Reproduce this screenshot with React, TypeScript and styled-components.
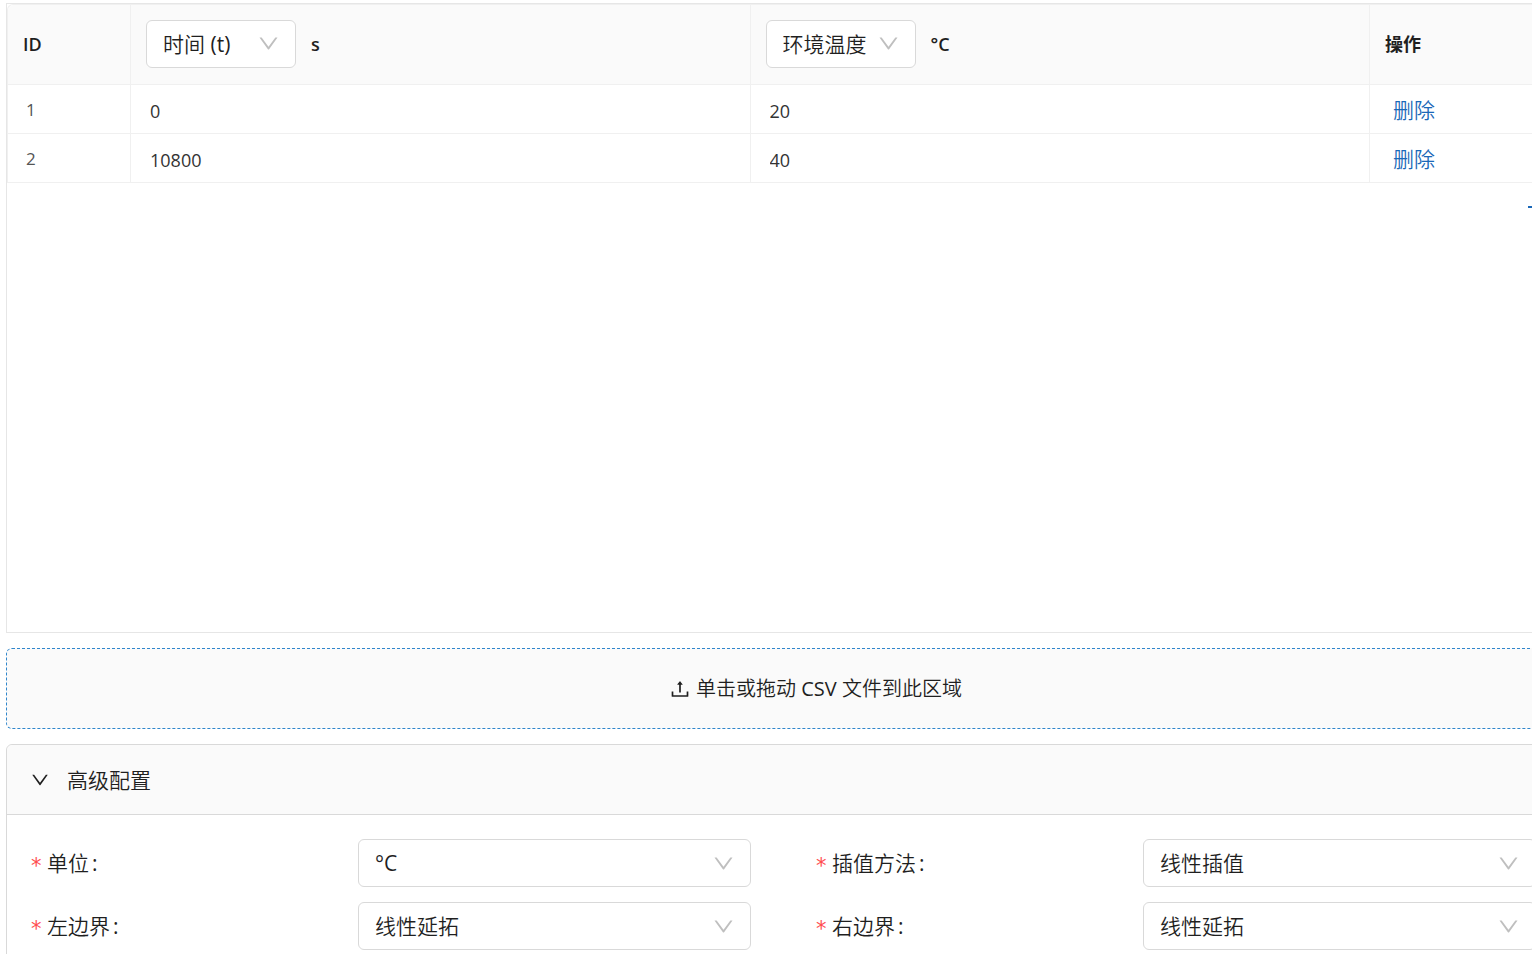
import React, { useState } from "react";
import styled, { createGlobalStyle } from "styled-components";

const GlobalStyle = createGlobalStyle`
  *, *::before, *::after { box-sizing: border-box; }
  body {
    margin: 0;
    background: #fff;
    color: #1f1f1f;
    font-family: "Open Sans", "Noto Sans CJK SC DemiLight", "Noto Sans CJK SC", sans-serif;
    font-size: 21px;
    line-height: 32px;
  }
  button, input, select { font: inherit; color: inherit; }
`;

const Viewport = styled.div`
  overflow: hidden;
`;

/* The editor is wider than its viewport and runs past the right edge. */
const Page = styled.main`
  display: flex;
  flex-direction: column;
  gap: 15px;
  width: calc(100% + 94px);
  padding: 3px 0 0 6px;
`;

const TablePanel = styled.section`
  min-height: 630px;
  border: 1px solid #e6e6e6;
`;

const DataTable = styled.table`
  width: 100%;
  table-layout: fixed;
  border-collapse: separate;
  border-spacing: 0;
  border-top: 1px solid #f0f0f0;
  border-left: 1px solid #f0f0f0;
  border-radius: 6px 0 0 0;
`;

const HeadCell = styled.th<{ $width?: number }>`
  width: ${(p) => (p.$width ? `${p.$width}px` : "auto")};
  height: 80px;
  padding: 0 15px 2px;
  text-align: left;
  font-family: "Open Sans", "Noto Sans CJK SC", sans-serif;
  font-size: 18px;
  font-weight: 600;
  background: #fafafa;
  border-right: 1px solid #f0f0f0;
  border-bottom: 1px solid #f0f0f0;
  &:first-child { border-top-left-radius: 6px; }
`;

const HeadField = styled.div`
  display: flex;
  align-items: center;
  gap: 15px;
`;

const Cell = styled.td`
  height: 49px;
  padding: 0 18px;
  font-size: 18px;
  color: #333;
  border-right: 1px solid #f0f0f0;
  border-bottom: 1px solid #f0f0f0;
`;

const IdCell = styled(Cell)`
  padding-top: 2px;
  color: #555;
  font-size: 17px;
`;

const ValueInput = styled.input`
  display: block;
  width: 100%;
  height: 40px;
  padding: 3px 1px 0;
  border: 0;
  outline: 0;
  background: transparent;
`;

const LinkButton = styled.button`
  display: block;
  height: 40px;
  padding: 2px 5px 0;
  border: 0;
  background: none;
  color: #1a68b8;
  font-size: 21px;
  cursor: pointer;
`;

const AddRow = styled.div`
  display: flex;
  justify-content: flex-end;
  padding: 13px 80px 0 0;
`;

const AddButton = styled.button`
  display: flex;
  padding: 0;
  border: 0;
  background: none;
  color: #1a68b8;
  cursor: pointer;
`;

const SelectBox = styled.span<{ $width: string }>`
  position: relative;
  display: block;
  flex: none;
  width: ${(p) => p.$width};
  height: 48px;
`;

const NativeSelect = styled.select`
  appearance: none;
  width: 100%;
  height: 100%;
  padding: 0 40px 0 16px;
  border: 1px solid #d9d9d9;
  border-radius: 6px;
  background: #fff;
  font-family: "Open Sans", "Noto Sans CJK SC DemiLight", "Noto Sans CJK SC", sans-serif;
  font-size: 21px;
  font-weight: 400;
`;

const SelectArrow = styled.span`
  position: absolute;
  top: 0;
  right: 17px;
  bottom: 0;
  display: flex;
  align-items: center;
  color: #bfbfbf;
  pointer-events: none;
`;

const UploadArea = styled.button`
  display: flex;
  align-items: center;
  justify-content: center;
  gap: 6px;
  height: 81px;
  border: 1px dashed #2f86cc;
  border-radius: 6px;
  background: #fafafa;
  font-size: 20px;
  cursor: pointer;
`;

const Collapse = styled.section`
  border: 1px solid #d9d9d9;
  border-radius: 6px;
`;

const CollapseHeader = styled.button`
  display: flex;
  align-items: center;
  gap: 18px;
  width: 100%;
  height: 70px;
  padding: 0 24px;
  border: 0;
  border-bottom: 1px solid #d9d9d9;
  border-radius: 6px 6px 0 0;
  background: #fafafa;
  cursor: pointer;
`;

const FormGrid = styled.div`
  display: grid;
  grid-template-columns: 1fr 1fr;
  row-gap: 15px;
  padding: 24px;
`;

const FormItem = styled.div`
  display: grid;
  grid-template-columns: 5fr 6fr 1fr;
  align-items: center;
`;

const FormLabel = styled.label`
  display: flex;
  align-items: center;
`;

const Required = styled.span`
  width: 16px;
  padding-top: 6px;
  color: #ff4d4f;
  font-family: "DejaVu Sans", sans-serif;
`;

const Colon = styled.span`
  margin-left: 3px;
`;

function DownIcon({ size }: { size: number }) {
  return (
    <svg width={size} height={size} viewBox="64 64 896 896" fill="currentColor" aria-hidden="true">
      <path d="M884 256h-75c-5.1 0-9.9 2.5-12.9 6.6L512 654.2 227.9 262.6c-3-4.1-7.8-6.6-12.9-6.6h-75c-6.5 0-10.3 7.4-6.5 12.7l352.6 486.1c12.8 17.6 39 17.6 51.7 0l352.6-486.1c3.9-5.3.1-12.7-6.4-12.7z" />
    </svg>
  );
}

function UploadIcon() {
  return (
    <svg width="20" height="20" viewBox="64 64 896 896" fill="currentColor" aria-hidden="true">
      <path d="M400 317.7h73.9V656c0 4.4 3.6 8 8 8h60c4.4 0 8-3.6 8-8V317.7H624c6.7 0 10.4-7.7 6.3-12.9L518.3 163a8 8 0 00-12.6 0l-112 141.7c-4.1 5.3-.4 13 6.3 13zM878 626h-60c-4.4 0-8 3.6-8 8v154H214V634c0-4.4-3.6-8-8-8h-60c-4.4 0-8 3.6-8 8v198c0 17.7 14.3 32 32 32h684c17.7 0 32-14.3 32-32V634c0-4.4-3.6-8-8-8z" />
    </svg>
  );
}

function PlusIcon() {
  return (
    <svg width="18" height="22" viewBox="0 0 18 22" fill="currentColor" aria-hidden="true">
      <path d="M8 3h2v7h7v2h-7v7H8v-7H1v-2h7z" />
    </svg>
  );
}

interface SelectProps {
  id: string;
  value: string;
  width?: string;
  label?: string;
}

function Select({ id, value, width = "100%", label }: SelectProps) {
  return (
    <SelectBox $width={width}>
      <NativeSelect id={id} aria-label={label} defaultValue={value}>
        <option>{value}</option>
      </NativeSelect>
      <SelectArrow>
        <DownIcon size={21} />
      </SelectArrow>
    </SelectBox>
  );
}

const initialRows = [
  { id: 1, time: "0", temp: "20" },
  { id: 2, time: "10800", temp: "40" },
];

const fields = [
  { id: "unit", label: "单位", value: "°C" },
  { id: "method", label: "插值方法", value: "线性插值" },
  { id: "left", label: "左边界", value: "线性延拓" },
  { id: "right", label: "右边界", value: "线性延拓" },
];

export default function App() {
  const [rows, setRows] = useState(initialRows);
  const [open, setOpen] = useState(true);

  const addRow = () =>
    setRows((all) => [...all, { id: all.length ? all[all.length - 1].id + 1 : 1, time: "", temp: "" }]);

  return (
    <Viewport>
      <GlobalStyle />
      <Page>
        <TablePanel>
          <DataTable>
            <thead>
              <tr>
                <HeadCell $width={123}>ID</HeadCell>
                <HeadCell>
                  <HeadField>
                    <Select id="col-time" value="时间 (t)" width="150px" label="时间" />
                    s
                  </HeadField>
                </HeadCell>
                <HeadCell>
                  <HeadField>
                    <Select id="col-temp" value="环境温度" width="150px" label="环境温度" />
                    °C
                  </HeadField>
                </HeadCell>
                <HeadCell $width={255}>操作</HeadCell>
              </tr>
            </thead>
            <tbody>
              {rows.map((row) => (
                <tr key={row.id}>
                  <IdCell>{row.id}</IdCell>
                  <Cell>
                    <ValueInput aria-label="时间" defaultValue={row.time} />
                  </Cell>
                  <Cell>
                    <ValueInput aria-label="环境温度" defaultValue={row.temp} />
                  </Cell>
                  <Cell>
                    <LinkButton onClick={() => setRows(rows.filter((r) => r.id !== row.id))}>删除</LinkButton>
                  </Cell>
                </tr>
              ))}
            </tbody>
          </DataTable>
          <AddRow>
            <AddButton aria-label="添加" onClick={addRow}>
              <PlusIcon />
            </AddButton>
          </AddRow>
        </TablePanel>

        <UploadArea>
          <UploadIcon />
          单击或拖动 CSV 文件到此区域
        </UploadArea>

        <Collapse>
          <CollapseHeader aria-expanded={open} onClick={() => setOpen(!open)}>
            <DownIcon size={18} />
            高级配置
          </CollapseHeader>
          {open && (
            <FormGrid>
              {fields.map((f) => (
                <FormItem key={f.id}>
                  <FormLabel htmlFor={f.id}>
                    <Required>*</Required>
                    {f.label}
                    <Colon>:</Colon>
                  </FormLabel>
                  <Select id={f.id} value={f.value} />
                </FormItem>
              ))}
            </FormGrid>
          )}
        </Collapse>
      </Page>
    </Viewport>
  );
}
